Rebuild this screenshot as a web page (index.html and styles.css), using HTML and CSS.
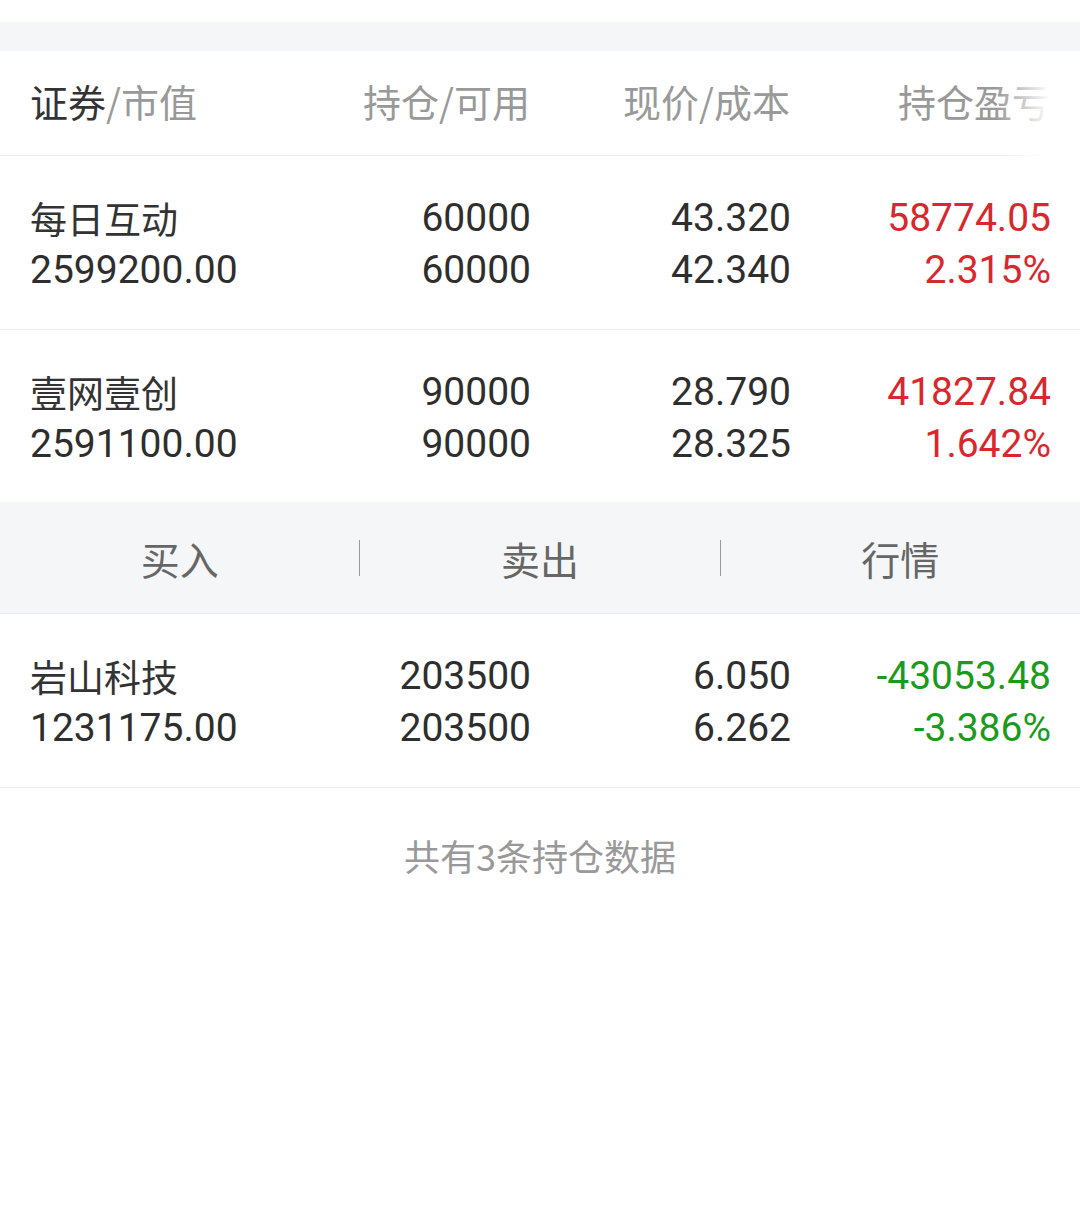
FILE: index.html
```html
<!doctype html>
<html>

<head>
    <meta charset="utf-8" />
    <meta name="viewport" content="width=device-width, initial-scale=1.0">
    <link rel="stylesheet" href="styles.css">
</head>

<body>

    <div class="main">

        <div class="top-gap"></div>

        <div class="table-head">
            <div class="cell first"><span class="strong">证券</span>/市值</div>
            <div class="cell">持仓/可用</div>
            <div class="cell">现价/成本</div>
            <div class="cell">持仓盈亏</div>
            <div class="fade"></div>
        </div>

        <div class="row">
            <div class="cell first">
                <span class="line name">每日互动</span>
                <span class="line">2599200.00</span>
            </div>
            <div class="cell">
                <span class="line">60000</span>
                <span class="line">60000</span>
            </div>
            <div class="cell">
                <span class="line">43.320</span>
                <span class="line">42.340</span>
            </div>
            <div class="cell up">
                <span class="line">58774.05</span>
                <span class="line">2.315%</span>
            </div>
        </div>

        <div class="row open">
            <div class="cell first">
                <span class="line name">壹网壹创</span>
                <span class="line">2591100.00</span>
            </div>
            <div class="cell">
                <span class="line">90000</span>
                <span class="line">90000</span>
            </div>
            <div class="cell">
                <span class="line">28.790</span>
                <span class="line">28.325</span>
            </div>
            <div class="cell up">
                <span class="line">41827.84</span>
                <span class="line">1.642%</span>
            </div>
        </div>

        <div class="actions">
            <div class="action">买入</div>
            <div class="action">卖出</div>
            <div class="action">行情</div>
        </div>

        <div class="row">
            <div class="cell first">
                <span class="line name">岩山科技</span>
                <span class="line">1231175.00</span>
            </div>
            <div class="cell">
                <span class="line">203500</span>
                <span class="line">203500</span>
            </div>
            <div class="cell">
                <span class="line">6.050</span>
                <span class="line">6.262</span>
            </div>
            <div class="cell down">
                <span class="line">-43053.48</span>
                <span class="line">-3.386%</span>
            </div>
        </div>

        <div class="footer">共有3条持仓数据</div>

    </div>

</body>

</html>
```

FILE: styles.css
```css
html,
body {
    margin: 0 0;
    height: 100%;
    font-family: Roboto, "Noto Sans CJK SC", sans-serif;
    background-color: white;
}

.main {
    height: 100%;
    background-color: white;
    color: #333;
}

.top-gap {
    height: 29px;
    margin-top: 22px;
    background-color: #f5f6f8;
}

.table-head,
.row {
    display: grid;
    grid-template-columns: 1fr 260px 260px 260px;
    padding: 0 29px 0 30px;
}

.table-head {
    position: relative;
    height: 98px;
    padding-bottom: 6px;
    align-items: center;
    border-bottom: 1px solid #ededed;
    font-family: "Noto Sans CJK SC", sans-serif;
    font-size: 38px;
    color: #999;
}

.table-head .cell {
    text-align: right;
    padding-right: 1px;
}

.table-head .cell.first {
    text-align: left;
}

.table-head .strong {
    color: #333;
}

.table-head .fade {
    position: absolute;
    top: 0;
    right: 0;
    width: 84px;
    height: 106px;
    background: linear-gradient(to right, rgba(255, 255, 255, 0), white 65%);
}

.row {
    padding-top: 36px;
    padding-bottom: 33px;
    height: 104px;
    border-bottom: 1px solid #f0f0f0;
    font-size: 39px;
    color: #2e2e2e;
}

.row.open {
    border-bottom: none;
    height: 103px;
}

.row .cell {
    display: flex;
    flex-direction: column;
    align-items: flex-end;
}

.row .cell.first {
    align-items: flex-start;
}

.row .line {
    line-height: 52px;
    white-space: nowrap;
}

.row .line.name {
    font-family: "Noto Sans CJK SC", sans-serif;
    font-size: 37px;
    color: #333;
}

.row .up {
    color: #d8282d;
}

.row .down {
    color: #1b9b1b;
}

.actions {
    display: flex;
    height: 111px;
    align-items: center;
    background-color: #f5f6f8;
    border-bottom: 1px solid #ebebeb;
    font-family: "Noto Sans CJK SC", sans-serif;
    font-size: 39px;
    color: #666;
}

.actions .action {
    flex: 1;
    text-align: center;
    line-height: 36px;
    border-left: 1px solid #999;
}

.actions .action:first-child {
    border-left: none;
}

.footer {
    padding-top: 46px;
    line-height: 42px;
    text-align: center;
    font-family: "Noto Sans CJK SC", sans-serif;
    font-size: 36px;
    color: #999;
}
```
